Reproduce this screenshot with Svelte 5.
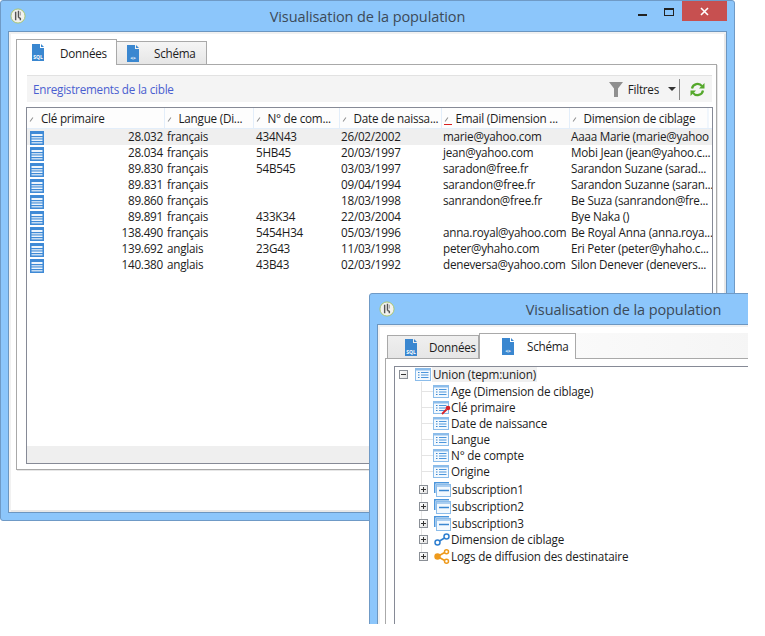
<script lang="ts">
	const columns = [
		{ label: 'Clé primaire', width: 137 },
		{ label: 'Langue (Di...', width: 89 },
		{ label: 'N° de com...', width: 86 },
		{ label: 'Date de naissa...', width: 102 },
		{ label: 'Email (Dimension ...', width: 128 },
		{ label: 'Dimension de ciblage', width: 144 }
	];

	const rows = [
		['28.032', 'français', '434N43', '26/02/2002', 'marie@yahoo.com', 'Aaaa Marie (marie@yahoo'],
		['28.034', 'français', '5HB45', '20/03/1997', 'jean@yahoo.com', 'Mobi Jean (jean@yahoo.c...'],
		['89.830', 'français', '54B545', '03/03/1997', 'saradon@free.fr', 'Sarandon Suzane (sarad...'],
		['89.831', 'français', '', '09/04/1994', 'sarandon@free.fr', 'Sarandon Suzanne (saran...'],
		['89.860', 'français', '', '18/03/1998', 'sanrandon@free.fr', 'Be Suza (sanrandon@fre...'],
		['89.891', 'français', '433K34', '22/03/2004', '', 'Bye Naka ()'],
		['138.490', 'français', '5454H34', '05/03/1996', 'anna.royal@yahoo.com', 'Be Royal Anna (anna.roya...'],
		['139.692', 'anglais', '23G43', '11/03/1998', 'peter@yhaho.com', 'Eri Peter (peter@yhaho.c...'],
		['140.380', 'anglais', '43B43', '02/03/1992', 'deneversa@yahoo.com', 'Silon Denever (denevers...']
	];

	const fields = ['Age (Dimension de ciblage)', 'Clé primaire', 'Date de naissance', 'Langue', 'N° de compte', 'Origine'];
	const subs = ['subscription1', 'subscription2', 'subscription3'];
</script>

{#snippet appIcon()}
	<svg class="app-icon" width="16" height="16" viewBox="0 0 17 17">
		<circle cx="8.5" cy="8.5" r="7.5" fill="#f2f2ee" stroke="#a9c46c" />
		<path d="M6 4v9M9 3v7M9 10l2 1v2" fill="none" stroke="#555" stroke-width="1.5" />
		<path d="M11 4v4" stroke="#999" stroke-width="1" />
	</svg>
{/snippet}

{#snippet docIcon(code: string)}
	<svg class="doc" width="13" height="17" viewBox="0 0 13 17">
		<path d="M0 0h8l0 4h4v13H0z" fill="#3a87d0" />
		<path d="M9 0l3 3H9z" fill="#3a87d0" />
		<text x="6" y="14.5" text-anchor="middle">{code}</text>
	</svg>
{/snippet}

{#snippet rowIcon()}
	<svg class="row-icon" width="14" height="14" viewBox="0 0 14 14">
		<rect width="14" height="14" fill="#3f8ad6" />
		<rect x="1.5" y="3" width="11" height="2" fill="#eef5fc" />
		<rect x="1.5" y="6" width="11" height="1.5" fill="#c6dcf2" />
		<rect x="1.5" y="8.5" width="11" height="1.5" fill="#eef5fc" />
		<rect x="1.5" y="11" width="11" height="1.5" fill="#c6dcf2" />
	</svg>
{/snippet}

{#snippet listIcon()}
	<svg class="tree-icon" width="16" height="13" viewBox="0 0 16 13">
		<rect x="0.5" y="0.5" width="15" height="12" fill="#f3f9fe" stroke="#8bbcea" />
		<rect x="1" y="1" width="14" height="1.5" fill="#8bbcea" />
		<path d="M3 4.5h1.5M3 7h1.5M3 9.5h1.5" stroke="#3a87d0" />
		<path d="M6 4.5h7.5M6 7h7.5M6 9.5h7.5" stroke="#4c96dc" />
	</svg>
{/snippet}

{#snippet keyIcon()}
	<svg class="key" width="10" height="10" viewBox="0 0 10 10">
		<path d="M1 9l4.5-4.5" stroke="#d8232a" stroke-width="1.8" />
		<circle cx="7" cy="3" r="2.3" fill="#d8232a" />
	</svg>
{/snippet}

{#snippet subIcon()}
	<svg class="tree-icon" width="17" height="15" viewBox="0 0 17 15">
		<path d="M0.75 11V0.75H15" fill="none" stroke="#4c96dc" stroke-width="1.5" />
		<rect x="2.5" y="2.5" width="14" height="12" fill="#f3f9fe" stroke="#8bbcea" />
		<rect x="3" y="3" width="13" height="2" fill="#a9cdf0" />
		<path d="M5 8.5h10" stroke="#3a87d0" stroke-width="1.5" />
	</svg>
{/snippet}

{#snippet linkIcon()}
	<svg class="tree-icon" width="16" height="13" viewBox="0 0 16 13">
		<circle cx="3.5" cy="9.5" r="2.5" fill="none" stroke="#2f7fd0" stroke-width="1.5" />
		<circle cx="12.5" cy="3.5" r="2.5" fill="none" stroke="#2f7fd0" stroke-width="1.5" />
		<path d="M5.5 8l5-3" stroke="#2f7fd0" stroke-width="1.5" />
	</svg>
{/snippet}

{#snippet shareIcon()}
	<svg class="tree-icon" width="16" height="15" viewBox="0 0 16 15">
		<path d="M3.5 7.5L12.5 2.5M3.5 7.5L12.5 12.5" stroke="#ee9a1c" stroke-width="1.6" />
		<circle cx="3.5" cy="7.5" r="3.2" fill="#ee9a1c" />
		<circle cx="12.5" cy="2.8" r="2" fill="#fff" stroke="#ee9a1c" stroke-width="1.5" />
		<circle cx="12.5" cy="12.2" r="2" fill="#fff" stroke="#ee9a1c" stroke-width="1.5" />
	</svg>
{/snippet}

{#snippet expander(open: boolean)}
	<span class="expander">
		<span class="dash"></span>
		{#if !open}<span class="bar"></span>{/if}
	</span>
{/snippet}

<div class="desktop">
	<section class="window first">
		<header class="titlebar">
			{@render appIcon()}
			<h1>Visualisation de la population</h1>
			<div class="buttons">
				<span class="minimize"></span>
				<span class="maximize"></span>
				<span class="close">
					<svg width="9" height="9" viewBox="0 0 9 9"><path d="M1 1l7 7M8 1l-7 7" stroke="#fff" stroke-width="1.6" /></svg>
				</span>
			</div>
		</header>

		<div class="client">
			<div class="tabs">
				<div class="tab active">{@render docIcon('SQL')}<span>Données</span></div>
				<div class="tab schema">{@render docIcon('<>')}<span>Schéma</span></div>
			</div>

			<div class="panel">
				<div class="toolbar">
					<span class="toolbar-title">Enregistrements de la cible</span>
					<svg class="funnel" width="14" height="15" viewBox="0 0 14 15">
						<path d="M0 0h14L9 6.5V15H5V6.5z" fill="#8f8f8f" />
					</svg>
					<span class="filter-label">Filtres</span>
					<span class="caret"></span>
					<span class="divider"></span>
					<svg class="refresh" width="15" height="15" viewBox="0 0 15 15">
						<path d="M2 6.5A5.6 5.6 0 0 1 12 4.2" fill="none" stroke="#55a82c" stroke-width="2.2" />
						<path d="M14.5 1v5.5H9z" fill="#55a82c" />
						<path d="M13 8.5A5.6 5.6 0 0 1 3 10.8" fill="none" stroke="#55a82c" stroke-width="2.2" />
						<path d="M.5 14V8.5H6z" fill="#55a82c" />
					</svg>
				</div>

				<div class="grid">
					<table>
						<colgroup>
							{#each columns as col}
								<col style="width: {col.width}px" />
							{/each}
						</colgroup>
						<thead>
							<tr>
								{#each columns as col, i}
									<th class:sorted={i === 4}>
										<span class="sort"></span>{col.label}
									</th>
								{/each}
							</tr>
						</thead>
						<tbody>
							{#each rows as row, r}
								<tr class:selected={r === 0}>
									<td class="key-cell">
										{@render rowIcon()}
										<span>{row[0]}</span>
									</td>
									{#each row.slice(1) as cell}
										<td>{cell}</td>
									{/each}
								</tr>
							{/each}
						</tbody>
					</table>
					<div class="grid-footer"></div>
				</div>
			</div>
		</div>
	</section>

	<div class="second-clip">
		<section class="window second">
			<header class="titlebar">
				{@render appIcon()}
				<h1>Visualisation de la population</h1>
			</header>

			<div class="client">
				<div class="tabs">
					<div class="tab data">{@render docIcon('SQL')}<span>Données</span></div>
					<div class="tab active schema">{@render docIcon('<>')}<span>Schéma</span></div>
				</div>

				<div class="panel">
					<div class="tree">
						<span class="vline"></span>
						<div class="node root">
							{@render expander(true)}
							{@render listIcon()}
							<span class="root-label">Union (tepm:union)</span>
						</div>
						{#each fields as field, i}
							<div class="node leaf">
								{@render listIcon()}
								{#if i === 1}{@render keyIcon()}{/if}
								<span>{field}</span>
							</div>
						{/each}
						{#each subs as sub, i}
							<div class="node branch sub" class:first-sub={i === 0}>
								{@render expander(false)}
								{@render subIcon()}
								<span>{sub}</span>
							</div>
						{/each}
						<div class="node branch">
							{@render expander(false)}
							{@render linkIcon()}
							<span>Dimension de ciblage</span>
						</div>
						<div class="node branch logs">
							{@render expander(false)}
							{@render shareIcon()}
							<span>Logs de diffusion des destinataire</span>
						</div>
					</div>
				</div>
			</div>
		</section>
	</div>
</div>

<style>
	:global(body) {
		background: #fff;
	}

	.desktop {
		position: relative;
		width: 765px;
		height: 636px;
		overflow: hidden;
		font-family: 'Open Sans', 'Noto Sans', sans-serif;
		font-size: 11.7px;
		letter-spacing: -0.24px;
		color: #1c1c1c;
	}

	.window {
		box-sizing: border-box;
		display: flex;
		flex-direction: column;
		background: #8cc6fb;
		border: 1px solid #6f9ac6;
		padding: 0 7px 7px;
	}

	.first {
		position: absolute;
		left: 0;
		top: 0;
		width: 735px;
		height: 521px;
		border-radius: 3px;
	}

	.second-clip {
		position: absolute;
		left: 369px;
		top: 293px;
		width: 379px;
		height: 331px;
		overflow: hidden;
	}

	.second {
		width: 509px;
		height: 400px;
		border-radius: 3px 3px 0 0;
	}

	.titlebar {
		position: relative;
		flex: none;
		height: 30px;
		display: flex;
		align-items: center;
		justify-content: center;
	}

	h1 {
		margin: 0;
		font-size: 14.5px;
		font-weight: 400;
		color: #3c4a58;
		letter-spacing: -0.1px;
	}

	.app-icon {
		position: absolute;
		left: 2px;
		top: 7px;
	}

	.buttons {
		position: absolute;
		right: 0;
		top: 0;
		display: flex;
		align-items: flex-start;
	}

	.minimize {
		width: 9px;
		height: 2px;
		background: #222;
		margin: 13px 17px 0 0;
	}

	.maximize {
		box-sizing: border-box;
		width: 10px;
		height: 8px;
		margin: 7px 8px 0 0;
		border: 1px solid #222;
		border-top-width: 2px;
	}

	.close {
		width: 45px;
		height: 20px;
		background: #c75050;
		display: flex;
		align-items: center;
		justify-content: center;
	}

	.client {
		flex: 1;
		min-height: 0;
		display: flex;
		flex-direction: column;
		background: #fff;
		border: 1px solid #6c96c0;
		box-shadow: inset 2px 2px 0 #f1f1f1, inset -2px -2px 0 #e8e8e8;
		padding: 7px 9px 42px 7px;
	}

	.tabs {
		display: flex;
		align-items: flex-end;
		height: 25px;
		flex: none;
	}

	.tab {
		box-sizing: border-box;
		position: relative;
		display: flex;
		align-items: center;
		height: 23px;
		border: 1px solid #a9a9a9;
		border-bottom: 0;
		border-left: 0;
		background: linear-gradient(#f5f5f5, #e6e6e6);
		padding-left: 10px;
		width: 90px;
		gap: 14px;
	}

	.tab.active {
		height: 26px;
		margin-bottom: -1px;
		background: #fff;
		border-left: 1px solid #a9a9a9;
		width: 101px;
		padding-left: 15px;
		gap: 15px;
		z-index: 1;
	}

	.doc text {
		font-size: 5px;
		font-weight: 700;
		letter-spacing: 0;
		fill: #fff;
	}

	.panel {
		flex: 1;
		min-height: 0;
		box-sizing: border-box;
		border: 1px solid #a9a9a9;
		box-shadow: 1px 1px 0 #e6e6e6;
		padding: 10px 4px 5px 10px;
		display: flex;
		flex-direction: column;
		gap: 5px;
	}

	.toolbar {
		flex: none;
		height: 27px;
		box-sizing: border-box;
		background: #f4f4f4;
		border-top: 1px solid #e2e2e2;
		display: flex;
		align-items: center;
		padding: 0 8px 0 6px;
	}

	.toolbar-title {
		color: #4a5fd0;
		flex: 1;
	}

	.funnel {
		margin-right: 5px;
	}

	.filter-label {
		margin-right: 9px;
	}

	.caret {
		width: 0;
		height: 0;
		border: 4px solid transparent;
		border-top: 4px solid #333;
		border-bottom: 0;
		margin-right: 3px;
	}

	.divider {
		width: 1px;
		height: 21px;
		background: #8a8a8a;
		margin-right: 10px;
	}

	.refresh {
		margin-right: -1px;
	}

	.grid {
		flex: 1;
		min-height: 0;
		margin-left: -1px;
		margin-right: -1px;
		border: 1px solid #868a96;
		overflow: hidden;
		display: flex;
		flex-direction: column;
		justify-content: space-between;
	}

	table {
		table-layout: fixed;
		width: 686px;
		border-collapse: collapse;
		flex: none;
	}

	th {
		position: relative;
		height: 20px;
		padding: 0;
		box-sizing: border-box;
		font-weight: 400;
		text-align: left;
		white-space: nowrap;
		overflow: hidden;
		background: #fdfdfd;
		border-right: 1px solid #e3eefa;
		border-bottom: 1px solid #e3eefa;
	}

	th:last-child {
		border-right: 0;
		background: linear-gradient(to right, #fdfdfd 138px, #e3eefa 138px, #e3eefa 139px, #fff 139px);
	}

	.sort {
		display: inline-block;
		width: 5px;
		height: 1px;
		margin: 0 7px 3px 2px;
		background: #8d8d8d;
		transform: rotate(-55deg);
	}

	.sorted::after {
		content: '';
		position: absolute;
		left: 2px;
		bottom: 3px;
		width: 8px;
		height: 1px;
		background: #d82020;
	}

	td {
		height: 16px;
		padding: 0 0 0 3px;
		white-space: nowrap;
		overflow: hidden;
		line-height: 15px;
		vertical-align: top;
	}

	td:nth-child(n + 4) {
		padding-left: 2px;
	}

	.selected td {
		background: #efefef;
	}

	.key-cell {
		padding: 0 1px 0 3px;
	}

	.key-cell span {
		float: right;
	}

	.row-icon {
		float: left;
		margin-top: 2px;
	}

	.grid-footer {
		flex: none;
		height: 17px;
		background: #efefef;
	}

	/* second window */
	.second .client {
		padding: 8px 0 0 7px;
		background: linear-gradient(#fff 8px, transparent 8px), linear-gradient(to right, #fff, #f2f2f2);
	}

	.second .tabs {
		padding-left: 2px;
	}

	.second .tab.data {
		width: 92px;
		height: 23px;
		border-left: 1px solid #a9a9a9;
		padding-left: 17px;
		gap: 11px;
		background: linear-gradient(#efefef, #e6e6e6);
	}

	.second .tab.active {
		width: 97px;
		height: 26px;
		border-left: 1px solid #a9a9a9;
		padding-left: 22px;
		gap: 12px;
		align-items: flex-start;
		padding-top: 4px;
	}

	.second .panel {
		background: #fff;
		padding: 7px 0 0 8px;
		border-right: 0;
		border-bottom: 0;
	}

	.tree {
		position: relative;
		flex: 1;
		border: 1px solid #868a96;
		border-right: 0;
		background: #fff;
		letter-spacing: -0.17px;
	}

	.vline {
		position: absolute;
		left: 26px;
		top: 15px;
		height: 174px;
		width: 1px;
		background: #e4e4e4;
	}

	.node {
		position: relative;
		height: 16px;
		display: flex;
		align-items: center;
		white-space: nowrap;
		margin-left: 4px;
	}

	.root {
		height: 15px;
		margin-bottom: 1px;
	}

	.root-label {
		background: #f0f0f0;
		padding: 0 1px;
		margin-left: 1px;
		line-height: 15px;
	}

	.leaf {
		padding-left: 34px;
	}

	.leaf::before {
		content: '';
		position: absolute;
		left: 22px;
		top: 8px;
		width: 12px;
		height: 1px;
		background: #e4e4e4;
	}

	.leaf .tree-icon {
		margin-right: 2px;
	}

	.key {
		position: absolute;
		left: 42px;
		top: 6px;
	}

	.branch {
		padding-left: 20px;
	}

	.sub {
		margin-top: 1px;
	}

	.first-sub {
		margin-top: 2px;
	}

	.logs {
		margin-top: 1px;
	}

	.branch .expander {
		margin-right: 6px;
	}

	.branch .tree-icon {
		margin-right: 1px;
	}

	.expander {
		position: relative;
		flex: none;
		box-sizing: border-box;
		width: 9px;
		height: 9px;
		border: 1px solid #8a8f96;
		background: linear-gradient(135deg, #fff, #e2e2e2);
		margin-right: 7px;
	}

	.dash {
		position: absolute;
		left: 1px;
		top: 3px;
		width: 5px;
		height: 1px;
		background: #333;
	}

	.bar {
		position: absolute;
		left: 3px;
		top: 1px;
		width: 1px;
		height: 5px;
		background: #333;
	}
</style>
